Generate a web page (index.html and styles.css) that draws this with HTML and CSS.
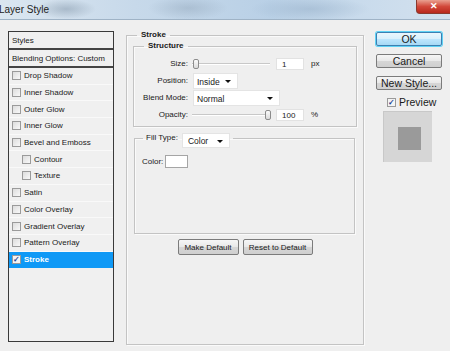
FILE: index.html
```html
<!DOCTYPE html>
<html lang="en">
<head>
    <meta charset="UTF-8">
    <title>Layer Style</title>
    <link rel="stylesheet" href="styles.css">
</head>
<body>
    <div class="titlebar">
        <span class="title">Layer Style</span>
        <span class="close">&#x2715;</span>
    </div>

    <div class="dialog">
        <div class="styles-list">
            <div class="list-head">Styles</div>
            <div class="list-head">Blending Options: Custom</div>
            <div class="item"><span class="cb"></span>Drop Shadow</div>
            <div class="item"><span class="cb"></span>Inner Shadow</div>
            <div class="item"><span class="cb"></span>Outer Glow</div>
            <div class="item"><span class="cb"></span>Inner Glow</div>
            <div class="item"><span class="cb"></span>Bevel and Emboss</div>
            <div class="item sub"><span class="cb"></span>Contour</div>
            <div class="item sub"><span class="cb"></span>Texture</div>
            <div class="item"><span class="cb"></span>Satin</div>
            <div class="item"><span class="cb"></span>Color Overlay</div>
            <div class="item"><span class="cb"></span>Gradient Overlay</div>
            <div class="item"><span class="cb"></span>Pattern Overlay</div>
            <div class="item selected"><span class="cb checked">&#x2713;</span>Stroke</div>
        </div>

        <fieldset class="group stroke">
            <legend>Stroke</legend>

            <fieldset class="group structure">
                <legend>Structure</legend>
                <div class="row">
                    <label>Size:</label>
                    <div class="slider size-slider"><span class="thumb"></span></div>
                    <span class="num">1</span>
                    <span class="unit">px</span>
                </div>
                <div class="row">
                    <label>Position:</label>
                    <div class="select pos-select">Inside<span class="arrow"></span></div>
                </div>
                <div class="row">
                    <label>Blend Mode:</label>
                    <div class="select blend-select">Normal<span class="arrow"></span></div>
                </div>
                <div class="row">
                    <label>Opacity:</label>
                    <div class="slider opacity-slider"><span class="thumb"></span></div>
                    <span class="num">100</span>
                    <span class="unit">%</span>
                </div>
            </fieldset>

            <fieldset class="group fill">
                <legend>
                    <span class="fill-label">Fill Type:</span>
                    <span class="select fill-select">Color<span class="arrow"></span></span>
                </legend>
                <div class="color-row">
                    <label>Color:</label>
                    <span class="swatch"></span>
                </div>
            </fieldset>

            <div class="btn-row">
                <button class="btn make">Make Default</button>
                <button class="btn reset">Reset to Default</button>
            </div>
        </fieldset>

        <div class="side">
            <button class="btn big ok">OK</button>
            <button class="btn big">Cancel</button>
            <button class="btn big">New Style...</button>
            <div class="preview-check"><span class="cb checked">&#x2713;</span>Preview</div>
            <div class="preview-box"><span class="preview-inner"></span></div>
        </div>
    </div>
</body>
</html>
```

FILE: styles.css
```css
* {
    box-sizing: border-box;
}
body {
    margin: 0;
    width: 450px;
    height: 351px;
    overflow: hidden;
    background-color: #efefef;
    font-family: "Liberation Sans", Arial, sans-serif;
    font-size: 8px;
    color: #1a1a1a;
}
.titlebar {
    height: 20px;
    display: flex;
    justify-content: space-between;
    align-items: flex-start;
    border-bottom: 1px solid #9fb3c6;
    background:
        radial-gradient(ellipse 30px 10px at 66px 9px, rgba(120,140,160,0.45), transparent),
        radial-gradient(ellipse 40px 12px at 188px 8px, rgba(130,150,170,0.35), transparent),
        radial-gradient(ellipse 60px 12px at 310px 9px, rgba(150,175,200,0.5), transparent),
        linear-gradient(90deg, #dbe6f0 0%, #c7d9ea 30%, #b9d0e6 60%, #c9dbec 80%, #d3e1ee 100%);
}
.title {
    font-size: 10px;
    line-height: 20px;
    color: #222;
    margin-left: -1px;
}
.close {
    width: 35px;
    height: 14px;
    margin-right: -1px;
    border: 1px solid #8a3a2e;
    border-top: none;
    border-radius: 0 0 0 4px;
    background: linear-gradient(#e9a090, #d2483a 50%, #b8281c);
    color: #fff;
    font-size: 9px;
    font-weight: bold;
    text-align: center;
    line-height: 13px;
}
.dialog {
    display: flex;
    align-items: flex-start;
    padding-left: 8px;
}

/* left list */
.styles-list {
    width: 106px;
    height: 311px;
    margin-top: 11px;
    border: 1px solid #3a3a3a;
    background-color: #f0f0f0;
}
.list-head {
    height: 18px;
    line-height: 17px;
    padding-left: 3px;
    border-bottom: 2px solid #444;
}
.item {
    height: 16.7px;
    display: flex;
    align-items: center;
    padding-left: 3px;
    border-bottom: 1px solid #f9f9f9;
}
.item.sub {
    padding-left: 13px;
}
.cb {
    width: 9px;
    height: 9px;
    margin-right: 3px;
    border: 1px solid #9a9a9a;
    background: linear-gradient(135deg, #dcdcdc, #f8f8f8);
    font-size: 8px;
    line-height: 7px;
    text-align: center;
    color: #1c3f94;
    font-weight: bold;
}
.cb.checked {
    background: #f4f4f4;
}
.item.selected {
    background-color: #0f99f6;
    color: #fff;
    font-weight: bold;
    border-bottom: none;
}

/* fieldsets */
.group {
    margin: 0;
    min-width: 0;
    border: 1px solid #c3c3c3;
    box-shadow: inset 1px 1px 0 #fafafa, 1px 1px 0 #fafafa;
}
.group legend {
    height: 10px;
    line-height: 10px;
    padding: 0 4px;
    font-weight: bold;
}
.stroke {
    width: 238px;
    height: 315px;
    margin-top: 10px;
    margin-left: 12px;
    padding: 0 6px;
}
.stroke > legend {
    margin-left: 4px;
}
.structure {
    margin-top: 1px;
    height: 86px;
    padding: 4px 6px 0;
}
.structure > legend {
    margin-left: 4px;
}
.row {
    height: 17px;
    display: flex;
    align-items: center;
}
.row label {
    width: 48px;
    text-align: right;
    margin-right: 5px;
}
.slider {
    position: relative;
    height: 10px;
    background: linear-gradient(transparent 4px, #c8c8c8 4px, #c8c8c8 5px, #fff 5px, #fff 6px, transparent 6px);
}
.size-slider {
    width: 78px;
    margin-left: -1px;
}
.opacity-slider {
    width: 78px;
    margin-left: -1px;
}
.thumb {
    position: absolute;
    top: 0;
    width: 6px;
    height: 10px;
    border: 1px solid #8c8c8c;
    border-radius: 2px;
    background: linear-gradient(#fbfbfb, #dadada);
}
.size-slider .thumb {
    left: 1px;
}
.opacity-slider .thumb {
    left: 73px;
}
.num {
    width: 28px;
    height: 12px;
    margin-left: 6px;
    padding-left: 5px;
    line-height: 12px;
    background: #fff;
    border: 1px solid #e2e2e2;
}
.unit {
    margin-left: 7px;
}
.select {
    position: relative;
    height: 16px;
    line-height: 16px;
    padding-left: 3px;
    background: #fff;
    border: 1px solid #e4e4e4;
    font-size: 8.5px;
}
.pos-select {
    width: 45px;
}
.blend-select {
    width: 87px;
}
.arrow {
    position: absolute;
    right: 6px;
    top: 6px;
    border-left: 3px solid transparent;
    border-right: 3px solid transparent;
    border-top: 3px solid #111;
}

.fill {
    height: 101px;
    margin: 6px 2px 0 1px;
    padding: 0 6px;
}
.fill > legend {
    margin-left: 2px;
    padding: 0 3px;
    font-weight: normal;
    display: flex;
    align-items: flex-start;
    overflow: visible;
}
.fill-label {
    line-height: 10px;
}
.fill-select {
    display: inline-block;
    width: 48px;
    height: 15px;
    line-height: 15px;
    margin-left: 4px;
    padding-left: 5px;
}
.color-row {
    display: flex;
    align-items: center;
    margin-top: 12px;
}
.color-row label {
    margin-left: 1px;
    margin-right: 2px;
}
.swatch {
    width: 23px;
    height: 13px;
    background: #fff;
    border: 1px solid #a5a5a5;
}

/* buttons */
.btn {
    font-family: inherit;
    font-size: 8px;
    color: #1a1a1a;
    height: 16px;
    padding: 0;
    border: 1px solid #7b7b7b;
    border-radius: 2px;
    background: linear-gradient(#f6f6f6, #e8e8e8 50%, #d6d6d6 51%, #cfcfcf);
}
.btn-row {
    display: flex;
    justify-content: center;
    gap: 4px;
    margin-top: 5px;
}
.make {
    width: 61px;
}
.reset {
    width: 70px;
}
.side {
    width: 66px;
    margin-left: 12px;
    margin-top: 12px;
    display: flex;
    flex-direction: column;
}
.btn.big {
    height: 14px;
    margin-bottom: 8px;
    font-size: 10.5px;
    line-height: 12px;
}
.btn.ok {
    border-color: #3c7fb1;
    box-shadow: 0 0 0 1px #5fd2f5;
    background: linear-gradient(#eaf6fd, #d9f0fc 50%, #bee6fd 51%, #a7d9f5);
}
.preview-check {
    display: flex;
    align-items: center;
    margin-top: -1px;
    margin-left: 11px;
    font-size: 10.5px;
    line-height: 10px;
}
.preview-check .cb {
    margin-right: 3px;
}
.preview-box {
    width: 49px;
    height: 51px;
    margin-top: 4px;
    margin-left: 7px;
    padding: 15px 0 0 14px;
    background: #d6d6d6;
    border-top: 1px solid #c8c8c8;
    border-left: 1px solid #c8c8c8;
}
.preview-inner {
    display: block;
    width: 23px;
    height: 23px;
    background: #9a9a9a;
}
```
